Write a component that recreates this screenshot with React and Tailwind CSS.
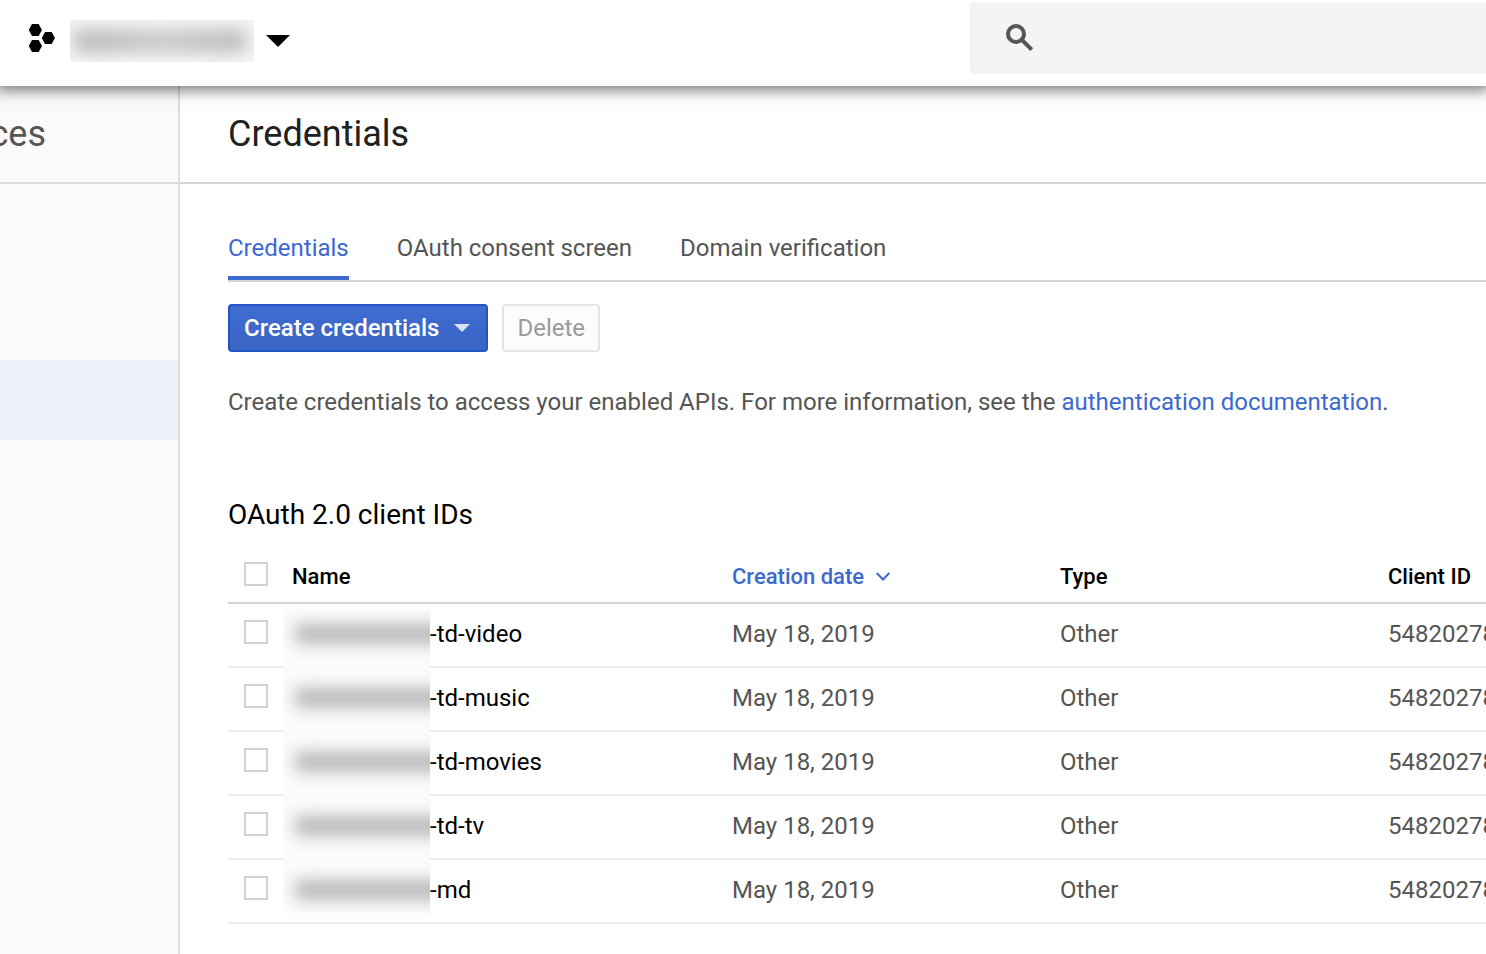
const clients = [
  { id: "video", suffix: "-td-video" },
  { id: "music", suffix: "-td-music" },
  { id: "movies", suffix: "-td-movies" },
  { id: "tv", suffix: "-td-tv" },
  { id: "md", suffix: "-md" },
];

function Header() {
  return (
    <header className="relative z-10 flex h-[86px] items-start bg-white shadow-[0_0_14px_4px_rgba(0,0,0,0.55)]">
      <button
        type="button"
        aria-label="Select project"
        className="flex h-[82px] items-center pl-7"
      >
        <svg className="mb-1.5 h-7 w-7" viewBox="0 0 28 28" fill="#000" aria-hidden="true">
          <path d="M4 0h6.6l3.4 6-3.4 6H4L.8 6z" />
          <path d="M4 16h6.6l3.4 6-3.4 6H4L.8 22z" />
          <path d="M17 8h6.6l3.4 6-3.4 6H17l-3.2-6z" />
        </svg>
        <span className="relative ml-3.5 block h-[42px] w-[184px] overflow-hidden bg-[#f6f6f6]">
          <span className="absolute top-2.5 left-1 h-[22px] w-[172px] rounded bg-linear-to-r from-[#b4b2b3] via-[#c6c6c6] to-[#b4b6b5] blur-[9px]" />
        </span>
        <svg className="ml-3 h-3 w-6" viewBox="0 0 24 12" fill="#000" aria-hidden="true">
          <path d="M0 0h24L12 12z" />
        </svg>
      </button>
      <label className="mt-0.5 ml-auto flex h-[72px] w-[516px] items-center rounded-l bg-[#f4f4f4] pl-9">
        <svg className="h-7 w-7 shrink-0" viewBox="0 0 28 28" fill="none" stroke="#555" strokeWidth="4" aria-hidden="true">
          <circle cx="10" cy="10" r="8" />
          <path d="M15.5 15.5L25.7 25.7" />
        </svg>
        <input
          type="search"
          aria-label="Search"
          className="h-full min-w-0 flex-1 bg-transparent px-4 text-[24px] outline-none"
        />
      </label>
    </header>
  );
}

function Sidebar() {
  return (
    <aside className="w-[180px] shrink-0 border-r-2 border-[#dcdcdc] bg-[#fafafa]">
      <div className="flex h-[98px] items-center justify-end overflow-hidden border-b-2 border-[#dcdcdc] pr-[132px] text-[36px] leading-[40px] text-[#555]">
        ces
      </div>
      <nav aria-label="Services" className="pt-44">
        <a href="#credentials" aria-label="Credentials" aria-current="page" className="block h-20 bg-[#ecf0f9]" />
      </nav>
    </aside>
  );
}

function Checkbox({ label }) {
  return (
    <input
      type="checkbox"
      aria-label={label}
      className="block h-6 w-6 appearance-none border-2 border-[#d2d2d2] bg-white checked:bg-[#3c69cf]"
    />
  );
}

function RedactedPrefix({ last }) {
  return (
    <span
      className={`absolute top-[5px] -left-[9px] z-[1] w-[147px] overflow-hidden bg-[#fbfbfb] ${last ? "h-12" : "h-16"}`}
    >
      <span className="absolute top-[15px] left-3 h-5 w-40 rounded bg-[#b8b8b8] blur-[8px]" />
    </span>
  );
}

function ClientTable() {
  const head = "h-[56px] border-b-2 border-[#d4d4d4] p-0 pt-1 text-left font-medium";
  const cell = "h-16 border-b-2 border-[#ebebeb] p-0 pb-0.5";
  return (
    <table className="mt-[15px] w-full table-fixed border-separate border-spacing-0 whitespace-nowrap text-[24px] leading-[32px] text-[#555]">
      <colgroup>
        <col className="w-16" />
        <col className="w-[440px]" />
        <col className="w-[328px]" />
        <col className="w-[328px]" />
        <col />
      </colgroup>
      <thead className="text-[22px] text-black">
        <tr>
          <th className="h-[56px] border-b-2 border-[#d4d4d4] p-0 pb-0.5 pl-4">
            <Checkbox label="Select all client IDs" />
          </th>
          <th className={head}>Name</th>
          <th className={`${head} text-[#3c69cf]`} aria-sort="descending">
            <button type="button" className="flex items-center gap-3 font-medium">
              Creation date
              <svg className="h-3 w-3.5" viewBox="0 0 14 12" fill="none" stroke="#3c69cf" strokeWidth="2" aria-hidden="true">
                <path d="M.7 2L7 8.5 13.3 2" />
              </svg>
            </button>
          </th>
          <th className={head}>Type</th>
          <th className={head}>Client ID</th>
        </tr>
      </thead>
      <tbody>
        {clients.map((client, index) => (
          <tr key={client.id}>
            <td className="h-16 border-b-2 border-[#ebebeb] p-0 pb-1.5 pl-4">
              <Checkbox label={`Select ${client.suffix}`} />
            </td>
            <td className={`${cell} relative text-black`}>
              <RedactedPrefix last={index === clients.length - 1} />
              <span className="block pl-[138px]">{client.suffix}</span>
            </td>
            <td className={cell}>May 18, 2019</td>
            <td className={cell}>Other</td>
            <td className={`${cell} overflow-hidden`}>54820278</td>
          </tr>
        ))}
      </tbody>
    </table>
  );
}

export default function App() {
  const tab = "border-b-4 pb-3";
  return (
    <div className="flex min-h-screen flex-col overflow-hidden bg-white font-['Roboto',sans-serif] text-[24px] leading-[32px] text-[#555]">
      <Header />
      <div className="flex flex-1">
        <Sidebar />
        <main className="min-w-0 flex-1">
          <div className="flex h-[98px] items-center border-b-2 border-[#d4d4d4] pl-12">
            <h1 className="text-[36px] leading-[40px] text-[#212121]">Credentials</h1>
          </div>
          <div className="pl-12">
            <nav aria-label="Sections" className="mt-12 flex gap-12 border-b-2 border-[#d4d4d4]">
              <a href="#credentials" aria-current="page" className={`${tab} border-[#3c69cf] text-[#3c69cf]`}>
                Credentials
              </a>
              <a href="#consent" className={`${tab} border-transparent`}>
                OAuth consent screen
              </a>
              <a href="#domains" className={`${tab} border-transparent`}>
                Domain verification
              </a>
            </nav>
            <div className="mt-[22px] flex gap-3.5">
              <button
                type="button"
                className="flex h-12 items-center gap-[15px] rounded border-2 border-[#2255c4] bg-linear-to-b from-[#3f6cd1] to-[#3a65c5] pr-4 pl-3.5 font-medium text-white"
              >
                Create credentials
                <svg className="h-2 w-4" viewBox="0 0 16 8" fill="#d8e1f5" aria-hidden="true">
                  <path d="M0 0h16L8 8z" />
                </svg>
              </button>
              <button
                type="button"
                disabled
                className="h-12 rounded border-2 border-[#e4e4e4] bg-[#fcfcfc] px-[13px] leading-[32px] text-[#9a9a9a]"
              >
                Delete
              </button>
            </div>
            <p className="mt-[34px]">
              Create credentials to access your enabled APIs. For more information, see the{" "}
              <a href="#docs" className="text-[#3c69cf]">
                authentication documentation
              </a>
              .
            </p>
            <h2 className="mt-[79px] text-[28px] leading-[36px] text-black">OAuth 2.0 client IDs</h2>
            <ClientTable />
          </div>
        </main>
      </div>
    </div>
  );
}
